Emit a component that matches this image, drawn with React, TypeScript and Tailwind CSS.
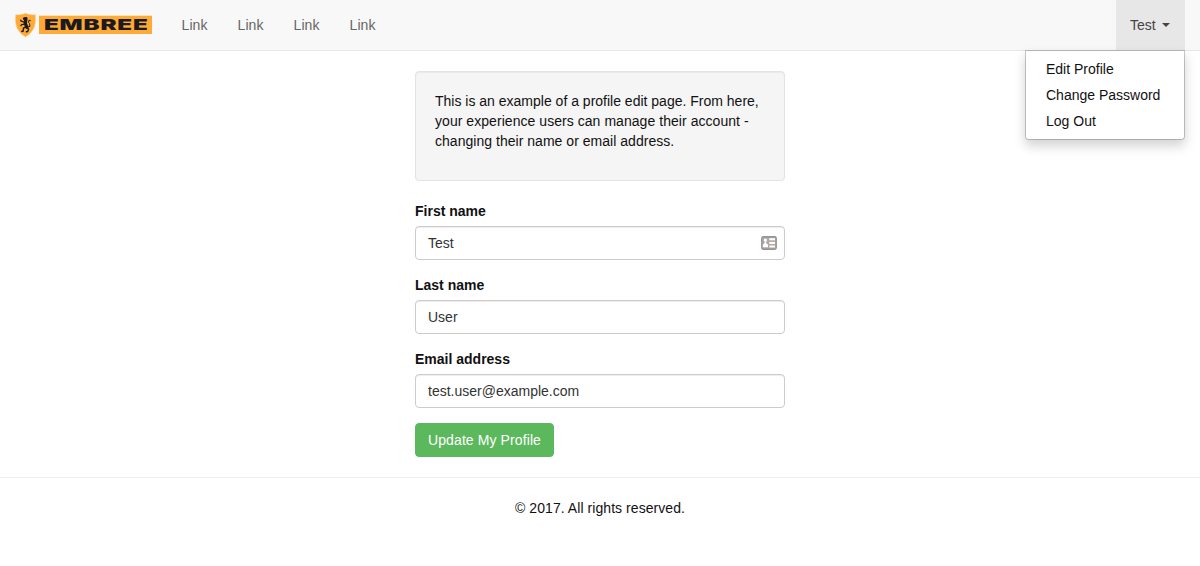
import React from "react";

const navLinks = ["Link", "Link", "Link", "Link"];
const menuItems = ["Edit Profile", "Change Password", "Log Out"];

function Logo() {
  return (
    <svg className="h-[26px] w-[140px]" viewBox="14 12 140 26" role="img" aria-label="Embree">
      <path
        d="M25.5 13C23 14.4 19 14.9 15.5 14.6C14.8 22 15.2 31.5 25.5 37C35.8 31.5 36.2 22 35.5 14.6C32 14.9 28 14.4 25.5 13Z"
        fill="#fdaa37"
        stroke="#ffe7c2"
        strokeWidth="0.5"
      />
      <g fill="none" stroke="#1c1a1c" strokeLinecap="round" strokeLinejoin="round">
        <path d="M25.8 19.6L25.3 23.5L26.8 27.2" strokeWidth="3.3" />
        <path d="M24.2 18.6L26.2 18.4" strokeWidth="2.6" />
        <path d="M24.5 22.2L21.2 21.2L20.6 20.2M24.8 24.2L21.6 24.6L20.9 25.6" strokeWidth="1.3" />
        <path d="M25.8 27L23.4 28.2L23.2 31L21.8 31.5M27.2 27.4L28.6 29.3L27.6 31.6L26.4 31.8" strokeWidth="1.4" />
        <path d="M27.6 27L30 26.4L29.5 23.6L28.5 22.4L29 20.2L30.4 20.6" strokeWidth="1" />
      </g>
      <rect x="39" y="15.7" width="113" height="18.3" fill="#fdaa37" />
      <text
        x="44"
        y="30.2"
        textLength="104.5"
        lengthAdjust="spacingAndGlyphs"
        fill="#1c1a1c"
        className="font-['Inter',sans-serif] text-[15px] font-black tracking-[0.5px]"
      >
        EMBREE
      </text>
    </svg>
  );
}

function ContactCardIcon() {
  return (
    <svg className="absolute top-[10px] right-2 h-[14px] w-4" viewBox="0 0 16 14" aria-hidden="true">
      <rect x="0.75" y="0.75" width="14.5" height="12.5" rx="1.5" fill="#b0a8a4" stroke="#969394" strokeWidth="1.3" />
      <g fill="#fff">
        <circle cx="4.4" cy="4.1" r="1.7" />
        <path d="M3.6 5.5h1.6v1.7l1.8 1.3v2.8H1.800V8.500l1.800-1.300z" />
        <rect x="8.300" y="2.200" width="5.700" height="2.100" />
        <rect x="8.300" y="5.900" width="5.700" height="2.100" />
        <rect x="8.300" y="9.500" width="5.700" height="2" />
      </g>
    </svg>
  );
}

function Field({ id, label, value, icon }: { id: string; label: string; value: string; icon?: React.ReactNode }) {
  return (
    <div className="mb-[15px]">
      <label htmlFor={id} className="mb-[5px] block font-bold">
        {label}
      </label>
      <div className="relative">
        <input
          id={id}
          defaultValue={value}
          className="block h-[34px] w-full rounded-[4px] border border-[#ccc] bg-white px-3 py-1.5 text-[#333] shadow-[inset_0_1px_1px_rgba(0,0,0,0.075)] outline-none"
        />
        {icon}
      </div>
    </div>
  );
}

export default function App() {
  return (
    <div className="min-h-[566px] bg-white font-['Liberation_Sans',Arial,sans-serif] text-[14px] leading-5 text-[#111]">
      <nav className="flex h-[51px] justify-between border-b border-[#e7e7e7] bg-[#f8f8f8] pr-[15px] pl-[14px] text-[#666]">
        <div className="flex">
          <a className="pt-3" href="#">
            <Logo />
          </a>
          <ul className="ml-[12.5px] flex">
            {navLinks.map((link, i) => (
              <li key={i} className="w-14 px-[15px] py-[15px] tracking-[0.1px]">
                <a href="#">{link}</a>
              </li>
            ))}
          </ul>
        </div>
        <div className="relative">
          <button className="flex h-[50px] w-[69px] items-center bg-[#e7e7e7] pl-[14px] text-[#444]">
            Test
            <span className="ml-1.5 border-x-4 border-t-4 border-x-transparent border-t-[#444]" />
          </button>
          <ul className="absolute top-[50px] right-0 w-40 rounded-b-[4px] border border-black/20 bg-white bg-clip-padding py-[5px] shadow-[0_6px_12px_rgba(0,0,0,0.175)]">
            {menuItems.map((item) => (
              <li key={item} className="px-5 py-[3px] whitespace-nowrap text-[#111]">
                <a href="#">{item}</a>
              </li>
            ))}
          </ul>
        </div>
      </nav>

      <main className="mx-auto mt-5 w-[370px]">
        <div className="mb-5 h-[110px] rounded-[4px] border border-[#e3e3e3] bg-[#f5f5f5] p-[19px] shadow-[inset_0_1px_1px_rgba(0,0,0,0.05)]">
          <p className="whitespace-nowrap">
            This is an example of a profile edit page. From here,
            <br />
            <span className="tracking-[0.05px]">your experience users can manage their account -</span>
            <br />
            <span className="tracking-[0.03px]">changing their name or email address.</span>
          </p>
        </div>
        <form>
          <Field id="first" label="First name" value="Test" icon={<ContactCardIcon />} />
          <Field id="last" label="Last name" value="User" />
          <Field id="email" label="Email address" value="test.user@example.com" />
          <button
            type="button"
            className="block h-[34px] w-[139px] rounded-[4px] border border-[#5cb85c] bg-[#5cb85c] text-center tracking-[0.1px] whitespace-nowrap text-white"
          >
            Update My Profile
          </button>
        </form>
      </main>

      <footer className="mt-5 border-t border-[#eee] pt-5 text-center tracking-[0.06px]">© 2017. All rights reserved.</footer>
    </div>
  );
}
